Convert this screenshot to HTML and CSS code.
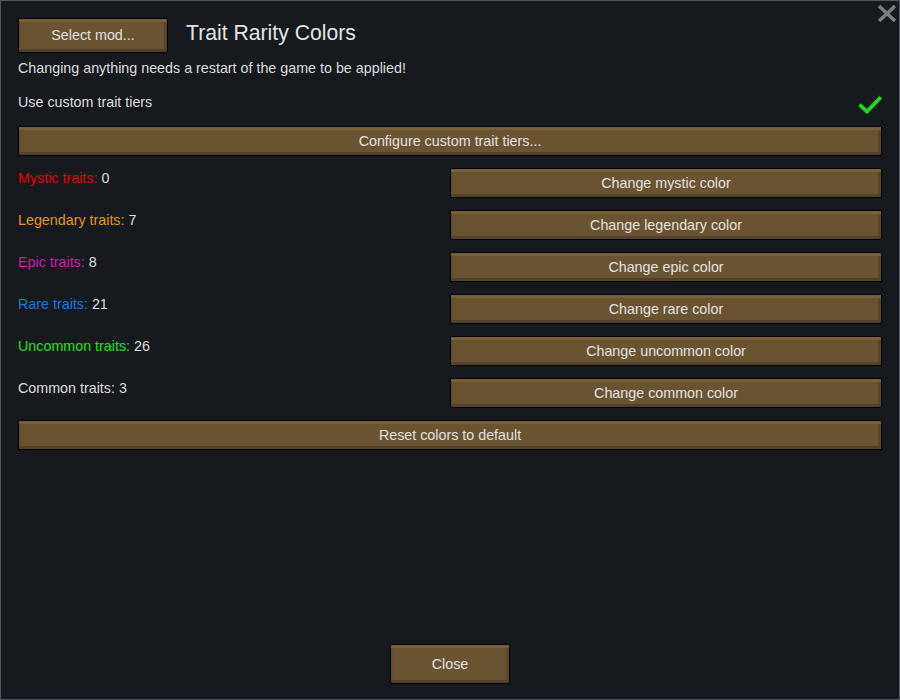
FILE: index.html
```html
<!DOCTYPE html>
<html>
<head>
<meta charset="utf-8">
<link rel="stylesheet" href="styles.css">
</head>
<body>
<div class="window">
  <svg class="close-x" width="20" height="19" viewBox="0 0 20 19">
    <path d="M2 2 L18 17 M18 2 L2 17" stroke="#7d7f82" stroke-width="3.4" fill="none"/>
  </svg>
  <div class="header">
    <div class="btn btn-select">Select mod...</div>
    <div class="title">Trait Rarity Colors</div>
  </div>
  <div class="notice">Changing anything needs a restart of the game to be applied!</div>
  <div class="toggle-row">
    <span>Use custom trait tiers</span>
    <svg class="check" width="24" height="19" viewBox="0 0 24 19">
      <path d="M3 11 L9 16.5 L21.5 3.5" stroke="#0b3a0b" stroke-width="6" fill="none" stroke-linecap="square"/>
      <path d="M3 11 L9 16.5 L21.5 3.5" stroke="#2fd12f" stroke-width="3.6" fill="none" stroke-linecap="square"/>
    </svg>
  </div>
  <div class="btn btn-wide">Configure custom trait tiers...</div>
  <div class="tiers">
    <div class="tier"><div class="label"><span class="mystic">Mystic traits:</span> 0</div><div class="btn btn-half">Change mystic color</div></div>
    <div class="tier"><div class="label"><span class="legendary">Legendary traits:</span> 7</div><div class="btn btn-half">Change legendary color</div></div>
    <div class="tier"><div class="label"><span class="epic">Epic traits:</span> 8</div><div class="btn btn-half">Change epic color</div></div>
    <div class="tier"><div class="label"><span class="rare">Rare traits:</span> 21</div><div class="btn btn-half">Change rare color</div></div>
    <div class="tier"><div class="label"><span class="uncommon">Uncommon traits:</span> 26</div><div class="btn btn-half">Change uncommon color</div></div>
    <div class="tier"><div class="label"><span class="common">Common traits:</span> 3</div><div class="btn btn-half">Change common color</div></div>
  </div>
  <div class="btn btn-wide btn-reset">Reset colors to default</div>
  <div class="spacer"></div>
  <div class="footer">
    <div class="btn btn-close">Close</div>
  </div>
</div>
</body>
</html>
```

FILE: styles.css
```css
html, body {
  margin: 0;
  padding: 0;
  background: #16191e;
}
body {
  font-family: "Liberation Sans", Arial, sans-serif;
  font-size: 14.3px;
  color: #dedede;
}
.window {
  position: relative;
  box-sizing: border-box;
  width: 900px;
  height: 700px;
  border: 1px solid #505762;
  background: #16191e;
  padding: 17px 17px 15px 17px;
  display: flex;
  flex-direction: column;
}
.close-x {
  position: absolute;
  top: 3px;
  right: 2px;
}
.btn {
  box-sizing: border-box;
  background: #6a5331;
  border: 1px solid #000;
  box-shadow:
    inset 0 3px 0 #7a5f37,
    inset 0 -3px 0 #52402a,
    inset 3px 0 0 #654f2f,
    inset -3px 0 0 #5a4629;
  color: #e2e2e2;
  text-align: center;
  display: flex;
  align-items: center;
  justify-content: center;
  white-space: nowrap;
}
.header {
  display: flex;
  align-items: center;
  height: 35px;
}
.btn-select {
  width: 150px;
  height: 35px;
  padding-bottom: 1px;
}
.title {
  margin-left: 18px;
  font-size: 21.2px;
  color: #e4e4e4;
  padding-bottom: 6px;
}
.notice {
  margin-top: 6px;
  line-height: 18px;
  height: 18px;
}
.toggle-row {
  margin-top: 15px;
  height: 20px;
  display: flex;
  align-items: center;
  justify-content: space-between;
}
.check {
  margin-right: 0;
  margin-top: 4px;
}
.btn-wide {
  margin-top: 14px;
  height: 30px;
}
.tiers {
  margin-top: 12px;
  display: flex;
  flex-direction: column;
  gap: 12px;
}
.tier {
  display: flex;
  height: 30px;
}
.label {
  width: 432px;
  line-height: 21px;
}
.btn-half {
  flex: 1;
  height: 30px;
}
.btn-reset {
  margin-top: 12px;
}
.mystic { color: #e60000; }
.legendary { color: #e6960f; }
.epic { color: #cc1aaa; }
.rare { color: #1a78dc; }
.uncommon { color: #19e619; }
.common { color: #dedede; }
.spacer {
  flex: 1;
}
.footer {
  display: flex;
  justify-content: center;
}
.btn-close {
  width: 120px;
  height: 40px;
}
```
